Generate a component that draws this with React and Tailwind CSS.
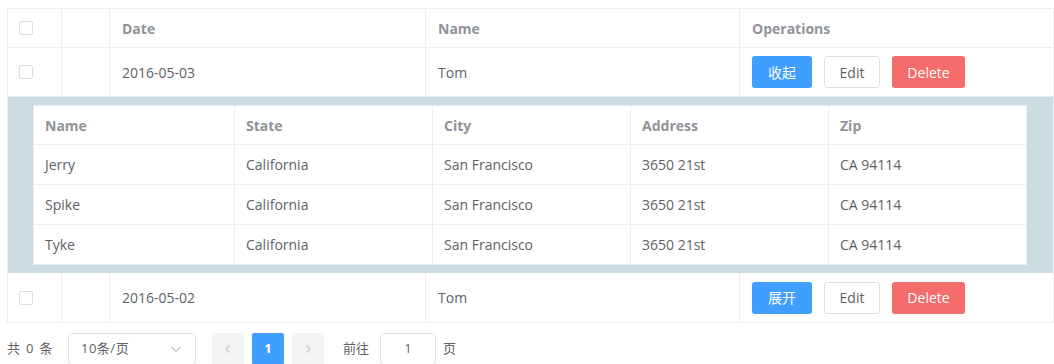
import React from "react";

const font = { fontFamily: '"Open Sans", "Noto Sans CJK SC", sans-serif' };

const Checkbox = () => (
  <span className="inline-block w-[14px] h-[14px] border border-[#dcdfe6] rounded-[2px] bg-white" />
);

const details = [
  { name: "Jerry", state: "California", city: "San Francisco", address: "3650 21st", zip: "CA 94114" },
  { name: "Spike", state: "California", city: "San Francisco", address: "3650 21st", zip: "CA 94114" },
  { name: "Tyke", state: "California", city: "San Francisco", address: "3650 21st", zip: "CA 94114" },
];

const outerCols = "grid grid-cols-[54px_48px_316px_314px_1fr]";
const innerCols = "grid grid-cols-[201px_198px_198px_198px_1fr]";

const Row = ({ date, name, toggle, last }) => (
  <div className={`${outerCols} h-[49px] text-[14px] text-[#606266] ${last ? "" : "border-b border-[#ebeef5]"}`}>
    <div className="border-r border-[#ebeef5] flex items-center pl-[11px]">
      <Checkbox />
    </div>
    <div className="border-r border-[#ebeef5]" />
    <div className="border-r border-[#ebeef5] flex items-center pl-3">{date}</div>
    <div className="border-r border-[#ebeef5] flex items-center pl-3">{name}</div>
    <div className="flex items-center pl-3 gap-3 text-[14px]">
      <button className="w-[60px] h-8 rounded-[3px] bg-[#409eff] text-white">{toggle}</button>
      <button className="w-[56px] h-8 rounded-[3px] border border-[#dcdfe6] bg-white text-[#606266]">Edit</button>
      <button className="w-[73px] h-8 rounded-[3px] bg-[#f56c6c] text-white">Delete</button>
    </div>
  </div>
);

export default function App() {
  return (
    <div className="h-[364px] overflow-hidden bg-white pt-2 pl-[7px]" style={font}>
      <div className="w-[1047px] border border-[#ebeef5]">
        {/* header */}
        <div className={`${outerCols} h-[39px] border-b border-[#ebeef5] text-[14px] font-bold text-[#909399]`}>
          <div className="border-r border-[#ebeef5] flex items-center pl-[11px]">
            <Checkbox />
          </div>
          <div className="border-r border-[#ebeef5]" />
          <div className="border-r border-[#ebeef5] flex items-center pl-3">Date</div>
          <div className="border-r border-[#ebeef5] flex items-center pl-3">Name</div>
          <div className="flex items-center pl-3">Operations</div>
        </div>

        <Row date="2016-05-03" name="Tom" toggle="收起" />

        {/* expanded */}
        <div className="bg-[#cddbe2] pl-[25px] pr-[26px] py-2">
          <div className="border-x border-t border-[#ebeef5] bg-white text-[14px]">
            <div className={`${innerCols} h-[39px] border-b border-[#ebeef5] font-bold text-[#909399]`}>
              {["Name", "State", "City", "Address", "Zip"].map((h, i) => (
                <div key={h} className={`flex items-center pl-[11px] ${i < 4 ? "border-r border-[#ebeef5]" : ""}`}>
                  {h}
                </div>
              ))}
            </div>
            {details.map((d) => (
              <div key={d.name} className={`${innerCols} h-[40px] text-[#606266] border-b border-[#ebeef5]`}>
                {[d.name, d.state, d.city, d.address, d.zip].map((v, i) => (
                  <div key={i} className={`flex items-center pl-[11px] ${i < 4 ? "border-r border-[#ebeef5]" : ""}`}>
                    {v}
                  </div>
                ))}
              </div>
            ))}
          </div>
        </div>

        <Row date="2016-05-02" name="Tom" toggle="展开" last />
      </div>

      {/* pagination */}
      <div className="flex items-center mt-[10px] text-[13px] text-[#606266]">
        <span className="w-[61px] flex gap-[6px]">
          <span>共</span>
          <span>0</span>
          <span>条</span>
        </span>
        <div className="w-[128px] h-8 border border-[#dcdfe6] rounded-[4px] flex items-center justify-between pl-3 pr-[13px]">
          <span className="tracking-[0.5px]">10条/页</span>
          <svg width="12" height="12" viewBox="0 0 12 12" fill="none">
            <path d="M1.5 4l4.5 4.5L10.5 4" stroke="#c0c4cc" strokeWidth="1.2" />
          </svg>
        </div>
        <div className="flex items-center gap-2 ml-4">
          <div className="w-8 h-8 rounded-[2px] bg-[#f4f4f5] flex items-center justify-center">
            <svg width="10" height="10" viewBox="0 0 10 10" fill="none">
              <path d="M6.5 1.5L3 5l3.5 3.5" stroke="#c0c4cc" strokeWidth="1.1" />
            </svg>
          </div>
          <div className="w-8 h-8 rounded-[2px] bg-[#409eff] text-white font-bold flex items-center justify-center">1</div>
          <div className="w-8 h-8 rounded-[2px] bg-[#f4f4f5] flex items-center justify-center">
            <svg width="10" height="10" viewBox="0 0 10 10" fill="none">
              <path d="M3.5 1.5L7 5 3.5 8.5" stroke="#c0c4cc" strokeWidth="1.1" />
            </svg>
          </div>
        </div>
        <span className="ml-[19px]">前往</span>
        <div className="ml-[11px] w-[56px] h-8 border border-[#dcdfe6] rounded-[4px] flex items-center justify-center">1</div>
        <span className="ml-[7px]">页</span>
      </div>
    </div>
  );
}
